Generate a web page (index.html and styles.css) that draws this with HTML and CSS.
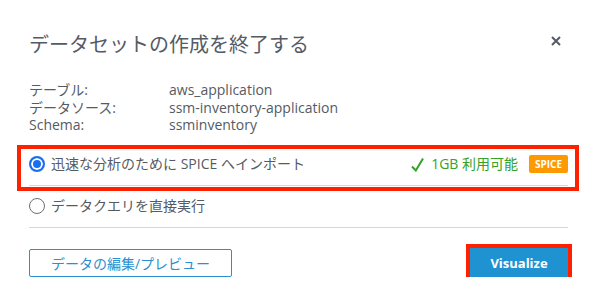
FILE: index.html
```html
<!DOCTYPE html>
<html lang="ja">
<head>
<meta charset="utf-8">
<title>データセットの作成を終了する</title>
<link rel="stylesheet" href="styles.css">
</head>
<body>
<div class="modal">
  <div class="header">
    <h1 class="title">データセットの作成を終了する</h1>
    <button class="close" aria-label="閉じる">
      <svg width="10" height="10" viewBox="0 0 10 10"><path d="M1 1 L9 9 M9 1 L1 9" stroke="#545b64" stroke-width="2" fill="none"/></svg>
    </button>
  </div>
  <dl class="info">
    <dt>テーブル:</dt><dd>aws_application</dd>
    <dt>データソース:</dt><dd>ssm-inventory-application</dd>
    <dt>Schema:</dt><dd>ssminventory</dd>
  </dl>
  <div class="options">
    <label class="option">
      <span class="radio radio-checked"></span>
      <span class="option-text">迅速な分析のために SPICE へインポート</span>
      <span class="capacity">
        <svg width="13" height="15" viewBox="0 0 13 15"><path d="M1 9.5 L4.8 13.5 L12 1.5" stroke="#34a12a" stroke-width="2" fill="none"/></svg>
        <span>1GB 利用可能</span>
      </span>
      <span class="badge">SPICE</span>
      <span class="highlight"></span>
    </label>
    <label class="option">
      <span class="radio"></span>
      <span class="option-text">データクエリを直接実行</span>
    </label>
  </div>
  <div class="footer">
    <button class="btn-outline">データの編集/プレビュー</button>
    <button class="btn-primary">Visualize</button>
  </div>
</div>
</body>
</html>
```
FILE: styles.css
```css
body {
  margin: 0;
  background: #ffffff;
  font-family: "Open Sans", "Noto Sans CJK JP", sans-serif;
  color: #545b64;
}

.modal {
  padding: 31px 26px 0 29px;
}

.header {
  display: flex;
  justify-content: space-between;
  align-items: flex-start;
}

.title {
  margin: 0;
  font-size: 20px;
  font-weight: 400;
  line-height: 28px;
  color: #545b64;
}

.close {
  border: none;
  background: none;
  padding: 0;
  margin: 5px 7px 0 0;
  width: 10px;
  height: 10px;
  display: flex;
}

.info {
  display: grid;
  grid-template-columns: 140px 1fr;
  margin: 22px 0 0;
  font-size: 14px;
  line-height: 17.5px;
}

.info dt,
.info dd {
  margin: 0;
}

.options {
  margin-top: 10.5px;
}

.option {
  position: relative;
  display: flex;
  align-items: center;
  padding: 10px 0 11px;
  border-bottom: 1px solid #d5d8da;
  font-size: 14px;
  line-height: 20px;
}

.radio {
  width: 16px;
  height: 16px;
  box-sizing: border-box;
  border-radius: 50%;
  border: 1px solid #6f6f6f;
  background: #fff;
  margin-right: 6px;
  flex: none;
}

.radio-checked {
  border: 2px solid #1a6ff0;
  background: #1a6ff0;
  box-shadow: inset 0 0 0 2px #fff;
}

.capacity {
  margin-left: auto;
  display: flex;
  align-items: center;
  gap: 7px;
  color: #34a12a;
}

.badge {
  margin-left: 11px;
  width: 39px;
  height: 18px;
  display: flex;
  align-items: center;
  justify-content: center;
  background: #ff9900;
  color: #fff;
  font-size: 10px;
  font-weight: 700;
  border-radius: 2px;
  line-height: 1;
}

.highlight {
  position: absolute;
  left: -12px;
  right: -11px;
  top: 1px;
  bottom: -6px;
  border: 4px solid #ff2000;
  pointer-events: none;
}

.footer {
  display: flex;
  justify-content: space-between;
  align-items: center;
  padding-top: 20px;
}

.btn-outline {
  height: 28px;
  width: 203px;
  box-sizing: border-box;
  border: 1px solid #2a90d0;
  border-radius: 2px;
  background: #fff;
  color: #2a90d0;
  font-family: inherit;
  font-size: 14px;
  padding: 0;
}

.btn-primary {
  height: 29px;
  width: 98px;
  border: none;
  background: #1f92d2;
  color: #fff;
  font-family: inherit;
  font-size: 13px;
  font-weight: 700;
  padding: 0;
  outline: 4px solid #ff2000;
}
```
